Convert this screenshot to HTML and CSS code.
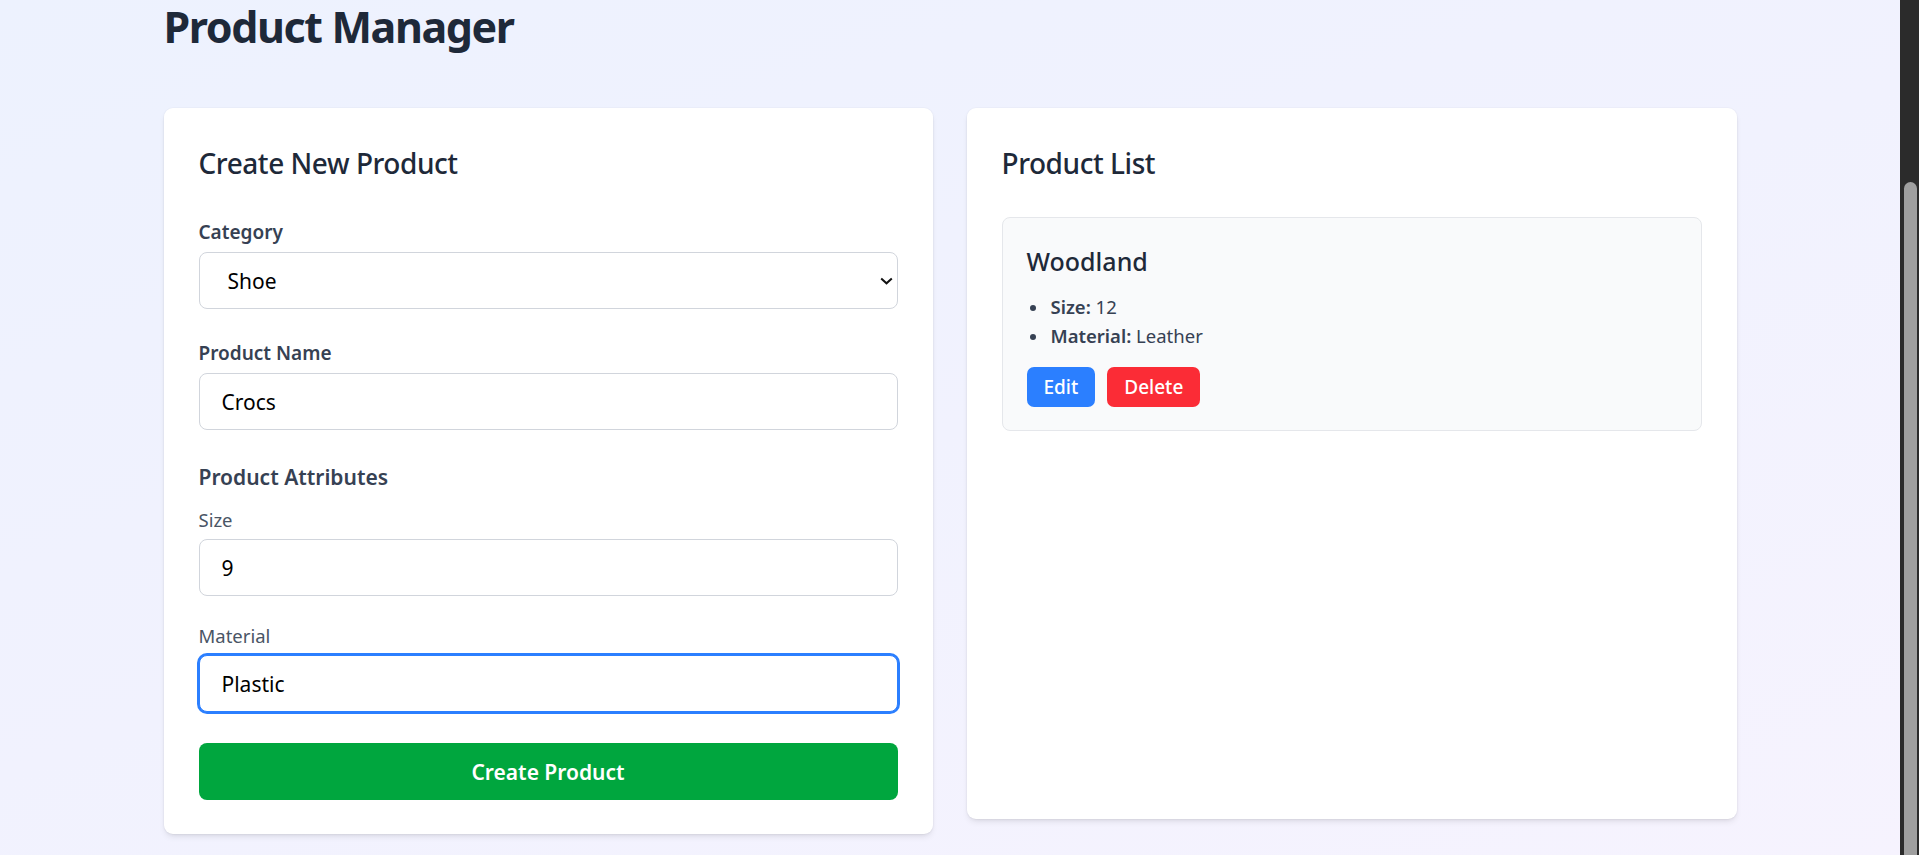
FILE: index.html
```html
<!DOCTYPE html>
<html lang="en">
<head>
<meta charset="utf-8">
<title>Product Manager</title>
<link rel="stylesheet" href="styles.css">
</head>
<body>
<div class="page">
  <main class="container">
    <h1 class="title">Product Manager</h1>
    <div class="columns">
      <section class="card card-form">
        <h2 class="card-title">Create New Product</h2>
        <form class="form">
          <div class="field">
            <label class="label" for="category">Category</label>
            <div class="select-wrap">
              <select class="control select" id="category">
                <option>Shoe</option>
              </select>
              <svg class="chevron" width="13" height="8" viewBox="0 0 13 8" aria-hidden="true">
                <path d="M1.2 1.5 L6.5 6.3 L11.8 1.5" fill="none" stroke="#111" stroke-width="2"/>
              </svg>
            </div>
          </div>
          <div class="field field-name">
            <label class="label" for="pname">Product Name</label>
            <input class="control" id="pname" type="text" value="Crocs">
          </div>
          <div class="attrs">
            <h3 class="attrs-title">Product Attributes</h3>
            <div class="attr-field">
              <label class="label-light" for="size">Size</label>
              <input class="control" id="size" type="text" value="9">
            </div>
            <div class="attr-field attr-field-next">
              <label class="label-light" for="material">Material</label>
              <input class="control control-focus" id="material" type="text" value="Plastic">
            </div>
          </div>
          <button class="btn-create" type="button">Create Product</button>
        </form>
      </section>
      <section class="card card-list">
        <h2 class="card-title card-title-list">Product List</h2>
        <div class="product">
          <h3 class="product-name">Woodland</h3>
          <ul class="attr-list">
            <li><strong>Size:</strong> 12</li>
            <li><strong>Material:</strong> Leather</li>
          </ul>
          <div class="actions">
            <button class="btn btn-edit" type="button">Edit</button>
            <button class="btn btn-delete" type="button">Delete</button>
          </div>
        </div>
      </section>
    </div>
  </main>
</div>
<div class="scrollbar" aria-hidden="true"><div class="scroll-thumb"></div></div>
</body>
</html>
```
FILE: styles.css
```css
html, body {
  margin: 0;
  padding: 0;
  height: 100%;
  overflow: hidden;
}
body {
  font-family: "Noto Sans", "Open Sans", sans-serif;
  background: linear-gradient(160deg, #edf2fe 0%, #f1f2fe 50%, #f6f3fe 100%);
  color: #1e2939;
}
.page {
  width: calc(100% - 19px);
  height: 100%;
}
.container {
  width: 1573px;
  margin: 0 auto;
}
.title {
  margin: 0 0 55px;
  padding-top: 1px;
  font-size: 43px;
  line-height: 52px;
  font-weight: 700;
  letter-spacing: -1.4px;
  color: #1e2939;
}
.columns {
  display: grid;
  grid-template-columns: 769px 770px;
  column-gap: 34px;
  align-items: start;
}
.card {
  background: #fff;
  border-radius: 9px;
  box-shadow: 0 4px 6px -1px rgba(0,0,0,0.08), 0 2px 4px -2px rgba(0,0,0,0.08), 0 0 0 1px rgba(0,0,0,0.02);
  padding: 36px 35px 34px;
  box-sizing: border-box;
}
.card-list {
  height: 711px;
}
.card-title {
  margin: 0 0 36px;
  font-size: 28px;
  line-height: 38px;
  font-weight: 500;
  letter-spacing: -0.45px;
  color: #1e2939;
}
.card-title-list {
  margin-bottom: 35px;
}
.form {
  display: flex;
  flex-direction: column;
}
.label {
  display: block;
  font-size: 19px;
  line-height: 28px;
  font-weight: 600;
  color: #364153;
  margin-bottom: 6px;
}
.field-name {
  margin-top: 30px;
}
.select-wrap {
  position: relative;
}
.control {
  display: block;
  width: 100%;
  height: 57px;
  box-sizing: border-box;
  border: 1px solid #d1d5dc;
  border-radius: 8px;
  background: #fff;
  padding: 0 22px;
  font-family: inherit;
  font-size: 21px;
  color: #000;
  outline: none;
}
.select {
  appearance: none;
  -webkit-appearance: none;
  padding-left: 28px;
}
.chevron {
  position: absolute;
  right: 5px;
  top: 25px;
}
.control-focus {
  border-color: #2b7fff;
  box-shadow: 0 0 0 2px #2b7fff;
}
.attrs {
  margin-top: 32px;
}
.attrs-title {
  margin: 0 0 14px;
  font-size: 21px;
  line-height: 30px;
  font-weight: 600;
  color: #364153;
}
.label-light {
  display: block;
  font-size: 18.5px;
  line-height: 28px;
  font-weight: 400;
  color: #4a5565;
  margin-bottom: 5px;
}
.attr-field-next {
  margin-top: 26px;
}
.btn-create {
  margin-top: 31px;
  height: 57px;
  border: 0;
  border-radius: 8px;
  background: #00a63e;
  color: #fff;
  font-family: inherit;
  font-size: 21px;
  font-weight: 600;
  cursor: pointer;
}
.product {
  background: #f9fafb;
  border: 1px solid #e5e7eb;
  border-radius: 8px;
  padding: 25px 24px 23px;
}
.product-name {
  margin: 0;
  font-size: 25px;
  line-height: 37px;
  font-weight: 500;
  color: #1e2939;
}
.attr-list {
  list-style: none;
  margin: 13px 0 0;
  padding: 0;
  font-size: 18.5px;
  line-height: 28.7px;
  color: #364153;
}
.attr-list li::before {
  content: "";
  display: inline-block;
  width: 6px;
  height: 6px;
  border-radius: 50%;
  background: #364153;
  vertical-align: middle;
  margin: -2px 15px 0 3px;
}
.attr-list strong {
  font-weight: 600;
}
.actions {
  display: flex;
  gap: 12px;
  margin-top: 17px;
}
.btn {
  height: 40px;
  padding: 0 17px;
  border: 0;
  border-radius: 7px;
  color: #fff;
  font-family: inherit;
  font-size: 19px;
  font-weight: 500;
  cursor: pointer;
}
.btn-edit {
  background: #2b7fff;
}
.btn-delete {
  background: #fb2c36;
}
.scrollbar {
  position: fixed;
  top: 0;
  right: 0;
  width: 19px;
  height: 100%;
  background: #2b2b2b;
}
.scroll-thumb {
  position: absolute;
  top: 182px;
  left: 4px;
  width: 13px;
  bottom: 0;
  background: #9f9f9f;
  border-radius: 7px 7px 0 0;
}
```
